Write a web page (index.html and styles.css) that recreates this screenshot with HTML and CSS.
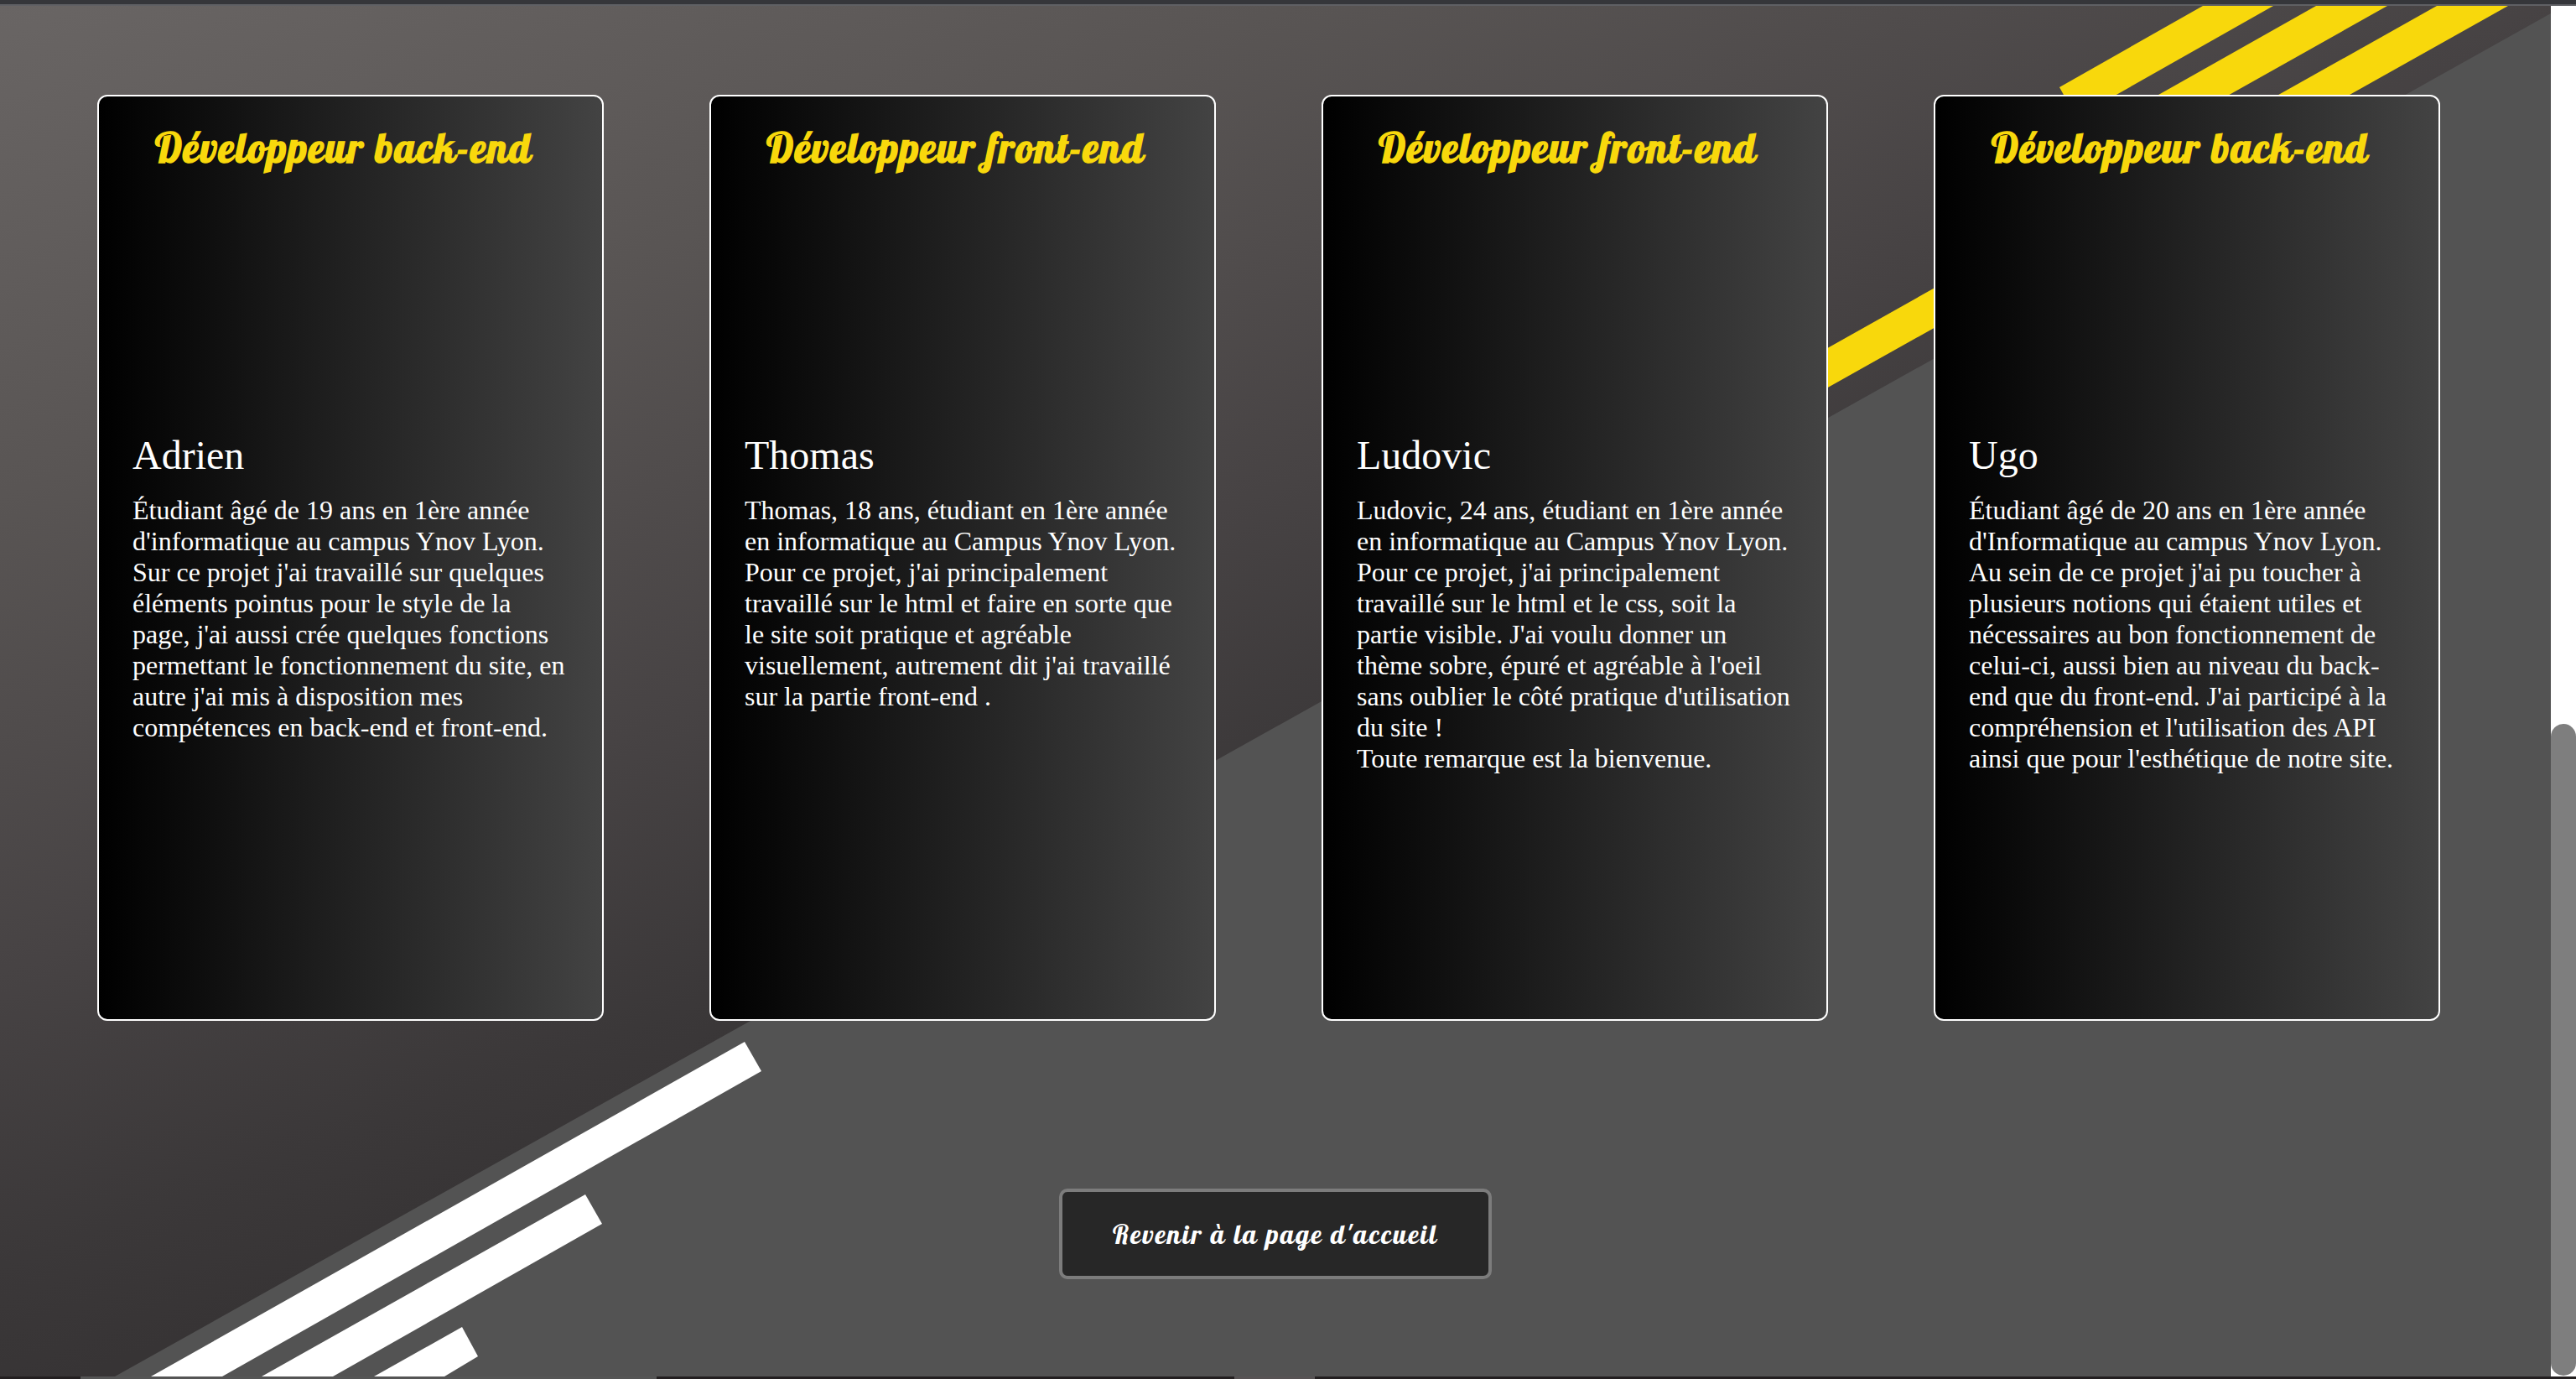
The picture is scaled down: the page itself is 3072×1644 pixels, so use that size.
FILE: index.html
```html
<!DOCTYPE html>
<html lang="fr">
<head>
<meta charset="utf-8">
<title>L'équipe</title>
<link rel="stylesheet" href="styles.css">
</head>
<body>
<div class="window-top"></div>
<div class="viewport">
  <main class="page">
    <svg class="backdrop" viewBox="0 0 3042 1634" preserveAspectRatio="none" aria-hidden="true">
      <defs>
        <linearGradient id="shade" gradientUnits="userSpaceOnUse" x1="0" y1="0" x2="554" y2="1459">
          <stop offset="0" stop-color="#696564"/>
          <stop offset="0.35" stop-color="#595554"/>
          <stop offset="0.69" stop-color="#474344"/>
          <stop offset="0.9" stop-color="#3b3839"/>
          <stop offset="1" stop-color="#373435"/>
        </linearGradient>
      </defs>
      <rect width="3042" height="1634" fill="#535353"/>
      <path d="M0 0H3042V9L137 1634H0Z" fill="url(#shade)"/>
      <g fill="#f8d80c">
        <path d="M2627 0H2711L2476 133L2456 97Z"/>
        <path d="M2762 0H2847L2500 195L2480 159Z"/>
        <path d="M2906 0H2991L2080 511L2060 475Z"/>
      </g>
      <g fill="#fff">
        <path d="M888 1235L908 1270L265 1634H180Z"/>
        <path d="M698 1417L718 1452L397 1634H312Z"/>
        <path d="M551 1575L570 1610L530 1634H446Z"/>
      </g>
    </svg>
    <section class="team">
      <article class="card">
        <h2 class="role">Développeur back-end</h2>
        <h3 class="name">Adrien</h3>
        <p class="bio">Étudiant âgé de 19 ans en 1ère année d'informatique au campus Ynov Lyon. Sur ce projet j'ai travaillé sur quelques éléments pointus pour le style de la page, j'ai aussi crée quelques fonctions permettant le fonctionnement du site, en autre j'ai mis à disposition mes compétences en back-end et front-end.</p>
      </article>
      <article class="card">
        <h2 class="role">Développeur front-end</h2>
        <h3 class="name">Thomas</h3>
        <p class="bio">Thomas, 18 ans, étudiant en 1ère année en informatique au Campus Ynov Lyon. Pour ce projet, j'ai principalement travaillé sur le html et faire en sorte que le site soit pratique et agréable visuellement, autrement dit j'ai travaillé sur la partie front-end .</p>
      </article>
      <article class="card">
        <h2 class="role">Développeur front-end</h2>
        <h3 class="name">Ludovic</h3>
        <p class="bio">Ludovic, 24 ans, étudiant en 1ère année en informatique au Campus Ynov Lyon. Pour ce projet, j'ai principalement travaillé sur le html et le css, soit la partie visible. J'ai voulu donner un thème sobre, épuré et agréable à l'oeil sans oublier le côté pratique d'utilisation du site !<br>Toute remarque est la bienvenue.</p>
      </article>
      <article class="card">
        <h2 class="role">Développeur back-end</h2>
        <h3 class="name">Ugo</h3>
        <p class="bio">Étudiant âgé de 20 ans en 1ère année d'Informatique au campus Ynov Lyon. Au sein de ce projet j'ai pu toucher à plusieurs notions qui étaient utiles et nécessaires au bon fonctionnement de celui-ci, aussi bien au niveau du back-end que du front-end. J'ai participé à la compréhension et l'utilisation des API ainsi que pour l'esthétique de notre site.</p>
      </article>
    </section>
    <button class="home" type="button">Revenir à la page d'accueil</button>
  </main>
  <div class="scrollbar"><div class="thumb"></div></div>
</div>
<div class="window-bottom"></div>
</body>
</html>
```
FILE: styles.css
```css
* {
  box-sizing: border-box;
}

body {
  margin: 0;
  min-height: 100vh;
  display: flex;
  flex-direction: column;
  font-family: "Liberation Serif", "Times New Roman", serif;
  color: #fff;
  background: #535353;
}

.window-top {
  height: 7px;
  background: #35363a;
  border-bottom: 2px solid #5f6064;
}

.viewport {
  flex: 1;
  display: flex;
}

.page {
  position: relative;
  flex: 1;
  display: flex;
  flex-direction: column;
  align-items: center;
  padding: 106px 0;
}

.backdrop {
  position: absolute;
  inset: 0;
  width: 100%;
  height: 100%;
}

.team {
  position: relative;
  align-self: stretch;
  display: grid;
  grid-template-columns: repeat(4, 1fr);
  gap: 126px;
  padding: 0 132px 0 116px;
}

.card {
  min-height: 1104px;
  padding: 31px 40px;
  border: 2px solid #fff;
  border-radius: 12px;
  background: linear-gradient(to right, #000, #434343);
}

/* Script lettering, lightly tracked */
.role,
.home {
  font-family: Lobster, "Liberation Serif", serif;
  letter-spacing: 2px;
}

.role {
  margin: 0;
  padding-right: 16px;
  font-size: 48px;
  line-height: 60px;
  font-weight: bold;
  text-align: center;
  white-space: nowrap;
  color: #f8d80c;
}

.name {
  margin: 309px 0 19px;
  font-size: 48px;
  line-height: 56px;
  font-weight: normal;
}

.bio {
  margin: 0;
  font-size: 32px;
  line-height: 37px;
}

.home {
  position: relative;
  min-width: 516px;
  height: 108px;
  margin-top: 200px;
  border: 4px solid #7c7c7c;
  border-radius: 10px;
  background: #272727;
  color: #fff;
  font-size: 32px;
}

.scrollbar {
  width: 30px;
  display: flex;
  flex-direction: column;
  justify-content: flex-end;
  padding-bottom: 1px;
  background: #fff;
}

.thumb {
  height: 777px;
  border-radius: 15px;
  background: #7e7e7e;
}

.window-bottom {
  height: 3px;
  background: linear-gradient(to right, #231f20 96px, #555 96px, #555 783px, #231f20 783px, #231f20 1472px, #575354 1472px, #575354 1568px, #231f20 1568px);
}
```
